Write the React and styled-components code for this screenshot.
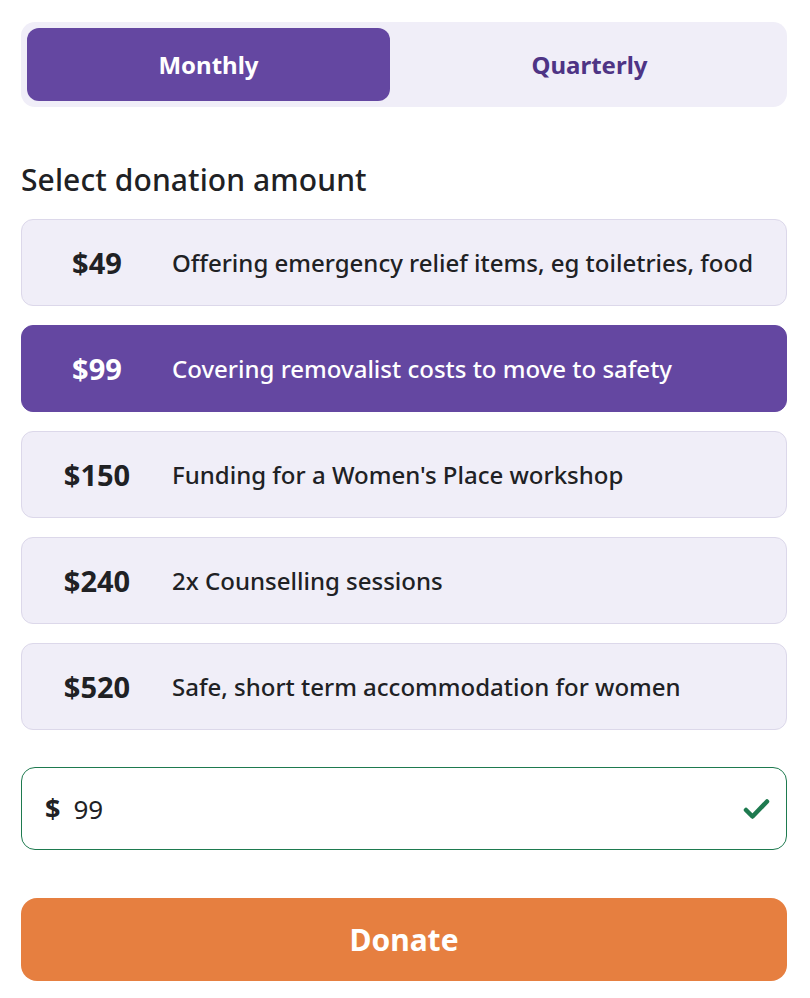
import React, { useState } from "react";
import styled, { createGlobalStyle } from "styled-components";

const Global = createGlobalStyle`
  html, body { margin: 0; padding: 0; background: #fff; }
  body { font-family: "Noto Sans", "Open Sans", sans-serif; color: #202124; }
  * { box-sizing: border-box; }
`;

const Page = styled.div`
  width: 810px;
  padding: 22px 23px 0 21px;
  display: flex;
  flex-direction: column;
`;

const Toggle = styled.div`
  display: grid;
  grid-template-columns: 363px 1fr;
  gap: 8px;
  background: #f0eef8;
  border-radius: 14px;
  padding: 6px;
  height: 85px;
`;

const Tab = styled.button`
  border: none;
  border-radius: 12px;
  font-family: inherit;
  font-size: 24px;
  font-weight: 700;
  cursor: pointer;
  background: ${p => (p.$active ? "#6447a1" : "transparent")};
  color: ${p => (p.$active ? "#fff" : "#4e3485")};
`;

const Heading = styled.h2`
  margin: 55px 0 21px;
  font-size: 30px;
  font-weight: 500;
  line-height: 36px;
  letter-spacing: 0.1px;
  color: #202124;
`;

const Options = styled.div`
  display: flex;
  flex-direction: column;
  gap: 19px;
`;

const Option = styled.button`
  display: grid;
  grid-template-columns: 150px 1fr;
  align-items: center;
  height: 87px;
  border-radius: 12px;
  border: 1px solid ${p => (p.$active ? "#6447a1" : "#dcd8ea")};
  background: ${p => (p.$active ? "#6447a1" : "#f0eef8")};
  color: ${p => (p.$active ? "#fff" : "#202124")};
  font-family: inherit;
  text-align: left;
  padding: 0;
  cursor: pointer;
`;

const Amount = styled.span`
  font-size: 29px;
  font-weight: 700;
  text-align: center;
`;

const Desc = styled.span`
  font-size: 24px;
  font-weight: 500;
`;

const InputBox = styled.div`
  margin-top: 37px;
  height: 83px;
  border: 1px solid #1e7a4f;
  border-radius: 14px;
  display: flex;
  align-items: center;
  padding: 0 16px 0 23px;
`;

const Currency = styled.span`
  font-size: 27px;
  font-weight: 700;
  color: #202124;
  margin-right: 13px;
`;

const AmountInput = styled.input`
  flex: 1;
  border: none;
  outline: none;
  font-family: inherit;
  font-size: 26px;
  color: #202124;
  padding: 0;
`;

const DonateBtn = styled.button`
  margin-top: 48px;
  height: 83px;
  border: none;
  border-radius: 16px;
  background: #e67f40;
  color: #fff;
  font-family: inherit;
  font-size: 30px;
  font-weight: 700;
  cursor: pointer;
`;

const options = [
  ["$49", "Offering emergency relief items, eg toiletries, food"],
  ["$99", "Covering removalist costs to move to safety"],
  ["$150", "Funding for a Women's Place workshop"],
  ["$240", "2x Counselling sessions"],
  ["$520", "Safe, short term accommodation for women"],
];

export default function App() {
  const [freq, setFreq] = useState("monthly");
  const [sel, setSel] = useState(1);
  const [val, setVal] = useState("99");
  return (
    <Page>
      <Global />
      <Toggle>
        <Tab $active={freq === "monthly"} onClick={() => setFreq("monthly")}>Monthly</Tab>
        <Tab $active={freq === "quarterly"} onClick={() => setFreq("quarterly")}>Quarterly</Tab>
      </Toggle>
      <Heading>Select donation amount</Heading>
      <Options>
        {options.map(([a, d], i) => (
          <Option key={a} $active={sel === i} onClick={() => { setSel(i); setVal(a.slice(1)); }}>
            <Amount>{a}</Amount>
            <Desc>{d}</Desc>
          </Option>
        ))}
      </Options>
      <InputBox>
        <Currency>$</Currency>
        <AmountInput value={val} onChange={e => setVal(e.target.value)} />
        <svg width="28" height="24" viewBox="0 0 28 24">
          <path d="M4 13 L10.5 19.5 L25 4.5" fill="none" stroke="#1e7a4f" strokeWidth="4.5" strokeLinecap="round" strokeLinejoin="round" />
        </svg>
      </InputBox>
      <DonateBtn>Donate</DonateBtn>
    </Page>
  );
}
